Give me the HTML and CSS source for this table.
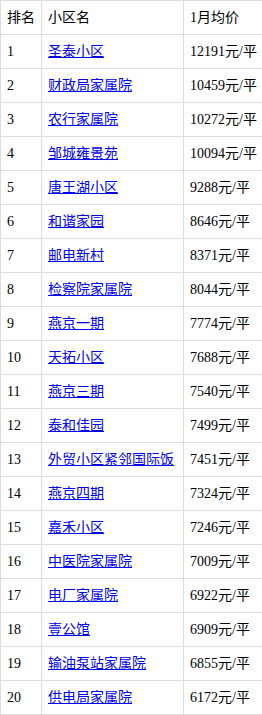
FILE: index.html
```html
<!DOCTYPE html>
<html lang="zh">
<head>
<meta charset="utf-8">
<title>小区均价排名</title>
<link rel="stylesheet" href="styles.css">
</head>
<body>
<table class="rank-table">
  <colgroup>
    <col class="col-rank">
    <col class="col-name">
    <col class="col-price">
  </colgroup>
  <thead>
    <tr><th>排名</th><th>小区名</th><th>1月均价</th></tr>
  </thead>
  <tbody>
    <tr><td>1</td><td><a href="#">圣泰小区</a></td><td>12191元/平</td></tr>
    <tr><td>2</td><td><a href="#">财政局家属院</a></td><td>10459元/平</td></tr>
    <tr><td>3</td><td><a href="#">农行家属院</a></td><td>10272元/平</td></tr>
    <tr><td>4</td><td><a href="#">邹城雍景苑</a></td><td>10094元/平</td></tr>
    <tr><td>5</td><td><a href="#">唐王湖小区</a></td><td>9288元/平</td></tr>
    <tr><td>6</td><td><a href="#">和谐家园</a></td><td>8646元/平</td></tr>
    <tr><td>7</td><td><a href="#">邮电新村</a></td><td>8371元/平</td></tr>
    <tr><td>8</td><td><a href="#">检察院家属院</a></td><td>8044元/平</td></tr>
    <tr><td>9</td><td><a href="#">燕京一期</a></td><td>7774元/平</td></tr>
    <tr><td>10</td><td><a href="#">天拓小区</a></td><td>7688元/平</td></tr>
    <tr><td>11</td><td><a href="#">燕京三期</a></td><td>7540元/平</td></tr>
    <tr><td>12</td><td><a href="#">泰和佳园</a></td><td>7499元/平</td></tr>
    <tr><td>13</td><td><a href="#">外贸小区紧邻国际饭</a></td><td>7451元/平</td></tr>
    <tr><td>14</td><td><a href="#">燕京四期</a></td><td>7324元/平</td></tr>
    <tr><td>15</td><td><a href="#">嘉禾小区</a></td><td>7246元/平</td></tr>
    <tr><td>16</td><td><a href="#">中医院家属院</a></td><td>7009元/平</td></tr>
    <tr><td>17</td><td><a href="#">电厂家属院</a></td><td>6922元/平</td></tr>
    <tr><td>18</td><td><a href="#">壹公馆</a></td><td>6909元/平</td></tr>
    <tr><td>19</td><td><a href="#">输油泵站家属院</a></td><td>6855元/平</td></tr>
    <tr><td>20</td><td><a href="#">供电局家属院</a></td><td>6172元/平</td></tr>
  </tbody>
</table>
</body>
</html>
```

FILE: styles.css
```css
html, body {
  margin: 0;
  padding: 0;
  background: #fff;
}

body {
  font-family: "Liberation Serif", "Noto Sans CJK SC", serif;
  font-size: 14px;
  color: #000;
}

.rank-table {
  border-collapse: collapse;
  table-layout: fixed;
  width: 262px;
}

.col-rank { width: 41px; }
.col-name { width: 142px; }
.col-price { width: 79px; }

.rank-table th,
.rank-table td {
  border: 1px solid #dddddd;
  padding: 7px 6px 6px 6px;
  line-height: 20px;
  height: 20px;
  text-align: left;
  font-weight: normal;
  white-space: nowrap;
  overflow: hidden;
  vertical-align: middle;
}

.rank-table a {
  color: #0000ee;
  text-decoration: underline;
}
```
